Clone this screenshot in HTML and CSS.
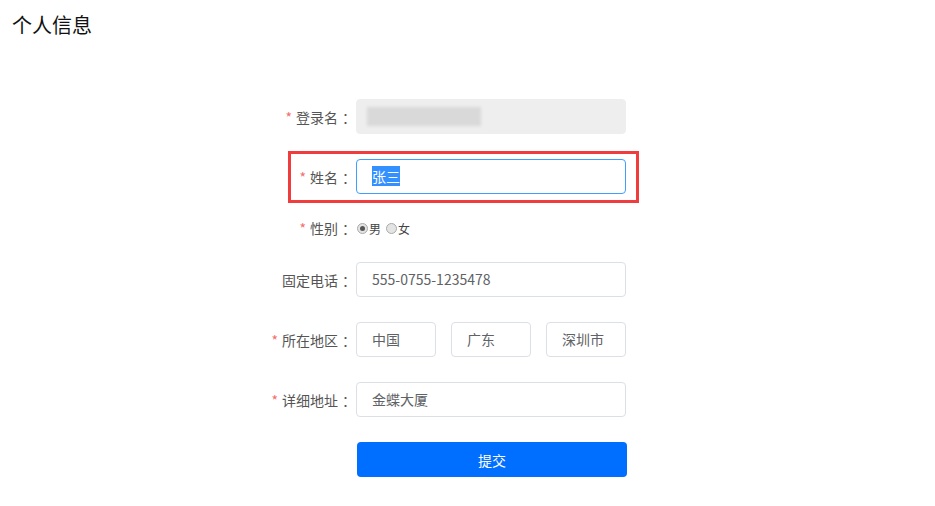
FILE: index.html
```html
<!DOCTYPE html>
<html lang="zh-CN">
<head>
    <meta charset="UTF-8">
    <title>个人信息</title>
    <link rel="stylesheet" href="styles.css">
</head>
<body>

<h1 class="page-title">个人信息</h1>

<div class="form">
    <div class="row">
        <div class="label"><span class="star">*</span>登录名<span class="colon">：</span></div>
        <div class="input input-disabled">
            <span class="blur-mask"></span>
        </div>
    </div>

    <div class="row row-marked">
        <div class="label"><span class="star">*</span>姓名<span class="colon">：</span></div>
        <div class="input input-focus"><span class="selected">张三</span></div>
        <div class="highlight-box"></div>
    </div>

    <div class="row row-short">
        <div class="label"><span class="star">*</span>性别<span class="colon">：</span></div>
        <div class="radios">
            <span class="radio checked"></span><span class="radio-text">男</span>
            <span class="radio"></span><span class="radio-text">女</span>
        </div>
    </div>

    <div class="row">
        <div class="label">固定电话<span class="colon">：</span></div>
        <div class="input">555-0755-1235478</div>
    </div>

    <div class="row">
        <div class="label"><span class="star">*</span>所在地区<span class="colon">：</span></div>
        <div class="region">
            <div class="input input-small">中国</div>
            <div class="input input-small">广东</div>
            <div class="input input-small">深圳市</div>
        </div>
    </div>

    <div class="row">
        <div class="label"><span class="star">*</span>详细地址<span class="colon">：</span></div>
        <div class="input">金蝶大厦</div>
    </div>

    <div class="row">
        <div class="label"></div>
        <button class="submit-button">提交</button>
    </div>
</div>

</body>
</html>
```

FILE: styles.css
```css
body {
    margin: 0;
    font-family: "Noto Sans CJK SC", "Liberation Sans", sans-serif;
    color: #606266;
    background: #fff;
}

.page-title {
    margin: 0;
    padding: 11px 0 0 12px;
    font-size: 20px;
    font-weight: normal;
    line-height: 28px;
    color: #111;
}

.form {
    margin: 60px 0 0 260px;
}

.row {
    position: relative;
    display: flex;
    align-items: center;
    height: 35px;
    margin-bottom: 25px;
}

.row-short {
    height: 18px;
}

.label {
    width: 96px;
    text-align: right;
    font-size: 14px;
    color: #555;
    white-space: nowrap;
}

.colon {
    padding-left: 4px;
}

.star {
    color: #f56c6c;
    margin-right: 4px;
}

.input {
    position: relative;
    box-sizing: border-box;
    width: 270px;
    height: 35px;
    line-height: 33px;
    padding-left: 15px;
    border: 1px solid #dcdfe6;
    border-radius: 4px;
    font-size: 14px;
    color: #606266;
    background: #fff;
}

.input-disabled {
    background: #eeeeee;
    border-color: #eeeeee;
}

.blur-mask {
    position: absolute;
    left: 10px;
    top: 7px;
    width: 114px;
    height: 19px;
    background: #d9d9d9;
    filter: blur(1.5px);
}

.input-focus {
    border-color: #409eff;
}

.selected {
    background: #3390ff;
    color: #fff;
}

.highlight-box {
    position: absolute;
    left: 28px;
    top: -8px;
    width: 351px;
    height: 52px;
    box-sizing: border-box;
    border: 3px solid #f03c3c;
}

.radios {
    display: flex;
    align-items: center;
    font-size: 12px;
    color: #444;
}

.radio {
    box-sizing: border-box;
    width: 11px;
    height: 11px;
    border: 1px solid #aaa;
    border-radius: 50%;
    background: #e4e4e4;
    margin: 0 1px 0 1px;
    position: relative;
}

.radio.checked::after {
    content: "";
    position: absolute;
    left: 2px;
    top: 2px;
    width: 5px;
    height: 5px;
    border-radius: 50%;
    background: #555;
}

.radio-text {
    margin-right: 4px;
}

.region {
    display: flex;
    gap: 15px;
}

.input-small {
    width: 80px;
}

.submit-button {
    width: 270px;
    height: 35px;
    margin-left: 1px;
    border: none;
    border-radius: 4px;
    background: #006eff;
    color: #fff;
    font-family: inherit;
    font-size: 14px;
    cursor: pointer;
}
```
